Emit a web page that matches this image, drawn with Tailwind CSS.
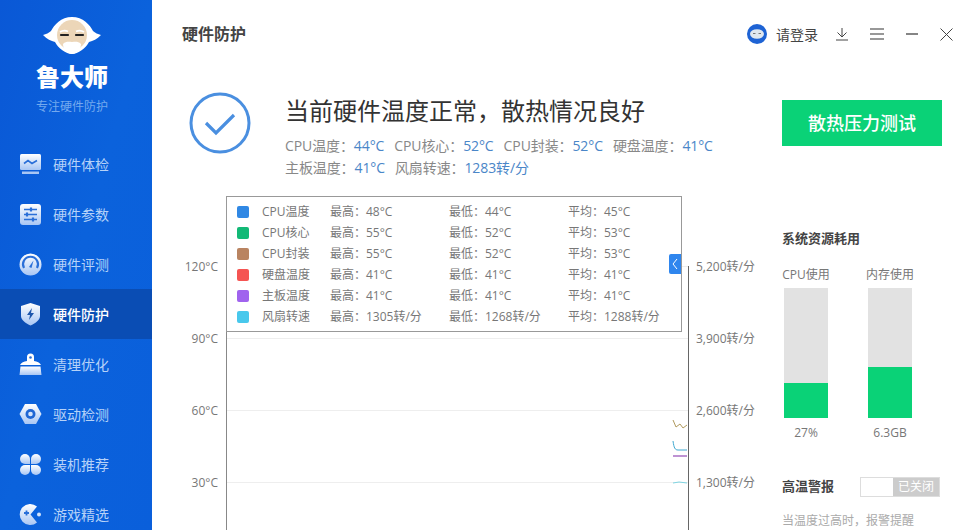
<!DOCTYPE html>
<html lang="zh-CN">
<head>
<meta charset="UTF-8">
<title>鲁大师 硬件防护</title>
<script src="https://cdn.jsdelivr.net/npm/@tailwindcss/browser@4"></script>
</head>
<body class="bg-white">
<svg width="0" height="0" class="absolute">
  <defs>
    <linearGradient id="ico" x1="0" y1="0" x2="0" y2="1">
      <stop offset="0" stop-color="#ffffff"/>
      <stop offset="1" stop-color="#a8c6f4"/>
    </linearGradient>
  </defs>
</svg>
<div class="flex w-[966px] h-[530px] overflow-hidden text-[#666] font-['Open_Sans','Noto_Sans_CJK_SC',sans-serif]">

  <!-- sidebar -->
  <aside class="w-[152px] h-[530px] shrink-0 flex flex-col overflow-hidden bg-gradient-to-br from-[#0a58d6] via-[#0b62dc] to-[#0a5fdb]">
    <div class="h-[139px] shrink-0 flex flex-col items-center pr-[8px]">
      <svg class="mt-[17px]" width="58" height="38" viewBox="0 0 58 38">
        <path d="M29 0C40 0 47 8 50 14C52 16 55 17 58 18C54 22 50 24 46 25C43 31 35 37 29 37C23 37 15 31 12 25C8 24 4 22 0 18C3 17 6 16 8 14C11 8 18 0 29 0Z" fill="#fff"/>
        <circle cx="29" cy="18" r="15" fill="#ecd6b8"/>
        <path d="M20 27C23 24 26 25 29 25C32 25 35 24 38 27C38 33 33 37 29 37C25 37 20 33 20 27Z" fill="#fff"/>
        <path d="M18 18H25M33 18H40" stroke="#222" stroke-width="2.200" stroke-linecap="round"/>
        <path d="M17 15Q21 12.500 25 14.500M33 14.500Q37 12.500 41 15" stroke="#fff" stroke-width="1.800" fill="none"/>
      </svg>
      <div class="mt-[6px] text-[24px] leading-[32px] font-black text-white">鲁大师</div>
      <div class="mt-[6px] text-[12px] leading-[16px] text-[#74a9ee]">专注硬件防护</div>
    </div>
    <nav class="flex flex-col shrink-0 text-[14px] text-[#b6d2f8]">
      <a class="h-[50px] flex items-center gap-[11px] pl-[19px]">
        <svg width="23" height="22" viewBox="0 0 23 22"><rect x="1" y="1" width="21" height="16" rx="1.500" fill="url(#ico)"/><path d="M3 18.500H20V21H3Z" fill="#a8c6f4"/><path d="M5 10.500L9 7.500L13 10.500L18 7.500" stroke="#2a6fd8" stroke-width="1.600" fill="none"/></svg>
        <span>硬件体检</span>
      </a>
      <a class="h-[50px] flex items-center gap-[11px] pl-[19px]">
        <svg width="23" height="23" viewBox="0 0 23 23"><rect x="1" y="1" width="21" height="21" rx="3" fill="url(#ico)"/><path d="M5 6.500H18M5 11.500H18M5 16.500H18" stroke="#2a6fd8" stroke-width="1.600"/><path d="M12 4.500V8.500M8 9.500V13.500M14 14.500V18.500" stroke="#2a6fd8" stroke-width="2.200"/></svg>
        <span>硬件参数</span>
      </a>
      <a class="h-[50px] flex items-center gap-[11px] pl-[19px]">
        <svg width="23" height="23" viewBox="0 0 23 23"><circle cx="11.500" cy="11.500" r="11" fill="url(#ico)"/><path d="M5 15A7.500 7.500 0 1 1 18 15" stroke="#2a6fd8" stroke-width="2.200" fill="none"/><path d="M10 14L14.500 7.500L12.500 15Z" fill="#2a6fd8"/></svg>
        <span>硬件评测</span>
      </a>
      <a class="h-[50px] flex items-center gap-[11px] pl-[19px] bg-[#0a4db4] text-white font-medium">
        <svg width="23" height="24" viewBox="0 0 23 24"><path d="M11.500 1L21 4V14C21 18 16 21.500 11.500 23.500C7 21.500 2 18 2 14V4Z" fill="url(#ico)"/><path d="M13 6L8 13H11L10 18L15 11H12Z" fill="#1d56ad"/></svg>
        <span>硬件防护</span>
      </a>
      <a class="h-[50px] flex items-center gap-[11px] pl-[19px]">
        <svg width="23" height="23" viewBox="0 0 23 23"><path d="M8 4A3.500 3.500 0 0 1 15 4V8C18 8.500 21 9.500 22 12H1C2 9.500 5 8.500 8 8Z" fill="#ffffff"/><path d="M1.500 13.500H21.500L22.500 22H.5Z" fill="url(#ico)"/><circle cx="11.500" cy="4.500" r="1.300" fill="#2a6fd8"/></svg>
        <span>清理优化</span>
      </a>
      <a class="h-[50px] flex items-center gap-[11px] pl-[19px]">
        <svg width="23" height="22" viewBox="0 0 23 22"><path d="M6 1H17L22.500 11L17 21H6L.5 11Z" fill="url(#ico)"/><circle cx="11.500" cy="11" r="5" fill="#1f66d4"/><circle cx="11.500" cy="11" r="2.300" fill="#d5e4fb"/></svg>
        <span>驱动检测</span>
      </a>
      <a class="h-[50px] flex items-center gap-[11px] pl-[19px]">
        <svg width="23" height="23" viewBox="0 0 23 23" fill="url(#ico)"><path d="M11 11H6A5 5 0 1 1 11 6Z"/><path d="M12 11V6A5 5 0 1 1 17 11Z"/><path d="M11 12V17A5 5 0 1 1 6 12Z"/><path d="M12 12H17A5 5 0 1 1 12 17Z"/></svg>
        <span>装机推荐</span>
      </a>
      <a class="h-[50px] flex items-center gap-[11px] pl-[19px]">
        <svg width="23" height="23" viewBox="0 0 23 23"><path d="M18 3.500A10.500 10.500 0 1 0 18 19.500L11.500 11.500Z" fill="url(#ico)"/><circle cx="20" cy="11.500" r="2" fill="#d5e4fb"/><path d="M5 10H10M7.500 7.500V12.500" stroke="#2a6fd8" stroke-width="1.800"/></svg>
        <span>游戏精选</span>
      </a>
    </nav>
  </aside>

  <!-- main -->
  <main class="w-[814px] h-[530px] flex flex-col">
    <header class="h-[68px] shrink-0 flex items-center pl-[30px] pr-[13px]">
      <h1 class="text-[16px] font-bold text-[#444] mr-auto">硬件防护</h1>
      <svg width="20" height="20" viewBox="0 0 20 20"><circle cx="10" cy="10" r="10" fill="#1e63d4"/><ellipse cx="10" cy="10" rx="7" ry="4.800" fill="#dfe7ef"/><path d="M6 9.500H8.500M11.500 9.500H14" stroke="#777" stroke-width="1"/></svg>
      <span class="ml-[9px] text-[14px] text-[#444]">请登录</span>
      <svg class="ml-[17px]" width="14" height="14" viewBox="0 0 14 14" fill="none" stroke="#444" stroke-width="1"><path d="M7 1V10M2.500 5.500L7 10L11.500 5.500M1 13H13"/></svg>
      <svg class="ml-[21px]" width="14" height="12" viewBox="0 0 14 12" fill="none" stroke="#333" stroke-width="1.200"><path d="M0 1H14M0 6H14M0 11H14"/></svg>
      <svg class="ml-[21px]" width="14" height="14" viewBox="0 0 14 14" fill="none" stroke="#333" stroke-width="1.200"><path d="M1 7H13"/></svg>
      <svg class="ml-[21px]" width="13" height="13" viewBox="0 0 13 13" fill="none" stroke="#444" stroke-width="1"><path d="M.5 .5L12.500 12.500M12.500 .5L.5 12.500"/></svg>
    </header>

    <div class="flex flex-1 min-h-0">
      <!-- status and chart -->
      <div class="w-[630px] shrink-0 flex flex-col">
        <div class="h-[128px] shrink-0 flex pl-[37px]">
          <svg class="mt-[24px]" width="62" height="62" viewBox="0 0 62 62" fill="none" stroke="#4a8fe0"><circle cx="31" cy="31" r="29" stroke-width="3"/><path d="M17 31L27 41L45 23" stroke-width="3.200"/></svg>
          <div class="ml-[34px] pt-[26px]">
            <div class="text-[24px] leading-[34px] text-[#333]">当前硬件温度正常，散热情况良好</div>
            <div class="mt-[7px] text-[14px] leading-[22px] text-[#888] tracking-[-0.1px]">
              <div class="flex gap-[10px]">
                <span>CPU温度：<b class="font-normal text-[#4a86c8]">44°C</b></span>
                <span>CPU核心：<b class="font-normal text-[#4a86c8]">52°C</b></span>
                <span>CPU封装：<b class="font-normal text-[#4a86c8]">52°C</b></span>
                <span>硬盘温度：<b class="font-normal text-[#4a86c8]">41°C</b></span>
              </div>
              <div class="flex gap-[10px]">
                <span>主板温度：<b class="font-normal text-[#4a86c8]">41°C</b></span>
                <span>风扇转速：<b class="font-normal text-[#4a86c8]">1283转/分</b></span>
              </div>
            </div>
          </div>
        </div>

        <!-- chart -->
        <div class="relative flex-1 min-h-0 flex text-[12px] text-[#777]">
          <div class="w-[74px] shrink-0 pt-[35px] text-right pr-[8px]">
            <div class="h-[72px] leading-[72px]">120°C</div>
            <div class="h-[72px] leading-[72px]">90°C</div>
            <div class="h-[72px] leading-[72px]">60°C</div>
            <div class="h-[72px] leading-[72px]">30°C</div>
          </div>
          <div class="relative w-[463px] shrink-0 mt-[70px] border-l border-r border-l-[#888] border-r-[#666]">
            <div class="h-[72px] border-t border-[#eee]"></div>
            <div class="h-[72px] border-t border-[#eee]"></div>
            <div class="h-[72px] border-t border-[#eee]"></div>
            <div class="h-[72px] border-t border-[#eee]"></div>
            <svg class="absolute right-0 top-[144px]" width="16" height="84" viewBox="0 0 16 84" fill="none">
              <path d="M1 10L4 17L8 14L11 18L15 15" stroke="#b09a5e"/>
              <path d="M1 31C2 38 3 40 6 40H15" stroke="#3fa8d0"/>
              <path d="M1 46H15" stroke="#a86fc4" stroke-width="1.500"/>
              <path d="M1 73Q6 71 15 73" stroke="#7fd4e2"/>
            </svg>
          </div>
          <div class="pl-[7px] pt-[35px] whitespace-nowrap">
            <div class="h-[72px] leading-[72px]">5,200转/分</div>
            <div class="h-[72px] leading-[72px]">3,900转/分</div>
            <div class="h-[72px] leading-[72px]">2,600转/分</div>
            <div class="h-[72px] leading-[72px]">1,300转/分</div>
          </div>

          <!-- legend over the chart -->
          <div class="absolute left-[74px] top-0 w-[456px] h-[136px] bg-white border border-[#999] pt-[4px] pl-[10px]">
            <div class="grid grid-cols-[25px_68px_119px_119px_1fr] auto-rows-[21px] items-center leading-[21px] text-[#777]">
              <i class="w-[12px] h-[12px] rounded-[2px] bg-[#3088e4]"></i><span>CPU温度</span><span>最高：48°C</span><span>最低：44°C</span><span>平均：45°C</span>
              <i class="w-[12px] h-[12px] rounded-[2px] bg-[#12b976]"></i><span>CPU核心</span><span>最高：55°C</span><span>最低：52°C</span><span>平均：53°C</span>
              <i class="w-[12px] h-[12px] rounded-[2px] bg-[#b98461]"></i><span>CPU封装</span><span>最高：55°C</span><span>最低：52°C</span><span>平均：53°C</span>
              <i class="w-[12px] h-[12px] rounded-[2px] bg-[#f55452]"></i><span>硬盘温度</span><span>最高：41°C</span><span>最低：41°C</span><span>平均：41°C</span>
              <i class="w-[12px] h-[12px] rounded-[2px] bg-[#a063ee]"></i><span>主板温度</span><span>最高：41°C</span><span>最低：41°C</span><span>平均：41°C</span>
              <i class="w-[12px] h-[12px] rounded-[2px] bg-[#48c8ec]"></i><span>风扇转速</span><span>最高：1305转/分</span><span>最低：1268转/分</span><span>平均：1288转/分</span>
            </div>
            <div class="absolute right-0 top-[57px] w-[12px] h-[20px] rounded-l-[2px] bg-[#2f86ee] flex items-center justify-center">
              <svg width="6" height="12" viewBox="0 0 6 12" fill="none" stroke="#fff"><path d="M5 1L1 6L5 11"/></svg>
            </div>
          </div>
        </div>
      </div>

      <!-- right panel -->
      <div class="flex-1 flex flex-col pt-[32px]">
        <button class="w-[160px] h-[46px] bg-[#0ad277] text-white text-[18px] font-medium">散热压力测试</button>
        <h2 class="mt-[83px] text-[13px] leading-[18px] font-bold text-[#444]">系统资源耗用</h2>
        <div class="mt-[19px] w-[132px] flex justify-between text-[12px] text-[#777] text-center">
          <div class="w-[48px] flex flex-col items-center">
            <span class="leading-[18px]">CPU使用</span>
            <div class="mt-[4px] w-[44px] h-[130px] bg-[#e2e2e2] flex items-end"><div class="w-full h-[35px] bg-[#0ad277]"></div></div>
            <span class="mt-[6px] leading-[18px]">27%</span>
          </div>
          <div class="w-[48px] flex flex-col items-center">
            <span class="leading-[18px]">内存使用</span>
            <div class="mt-[4px] w-[44px] h-[130px] bg-[#e2e2e2] flex items-end"><div class="w-full h-[51px] bg-[#0ad277]"></div></div>
            <span class="mt-[6px] leading-[18px]">6.3GB</span>
          </div>
        </div>
        <div class="mt-[35px] flex items-center">
          <span class="text-[13px] font-bold text-[#444]">高温警报</span>
          <div class="ml-[26px] w-[80px] h-[20px] flex border border-[#ddd] bg-white">
            <div class="w-[32px]"></div>
            <div class="flex-1 bg-[#cccccc] text-white text-[12px] leading-[18px] text-center">已关闭</div>
          </div>
        </div>
        <p class="mt-[15px] text-[12px] text-[#aaa]">当温度过高时，报警提醒</p>
      </div>
    </div>
  </main>
</div>
</body>
</html>
